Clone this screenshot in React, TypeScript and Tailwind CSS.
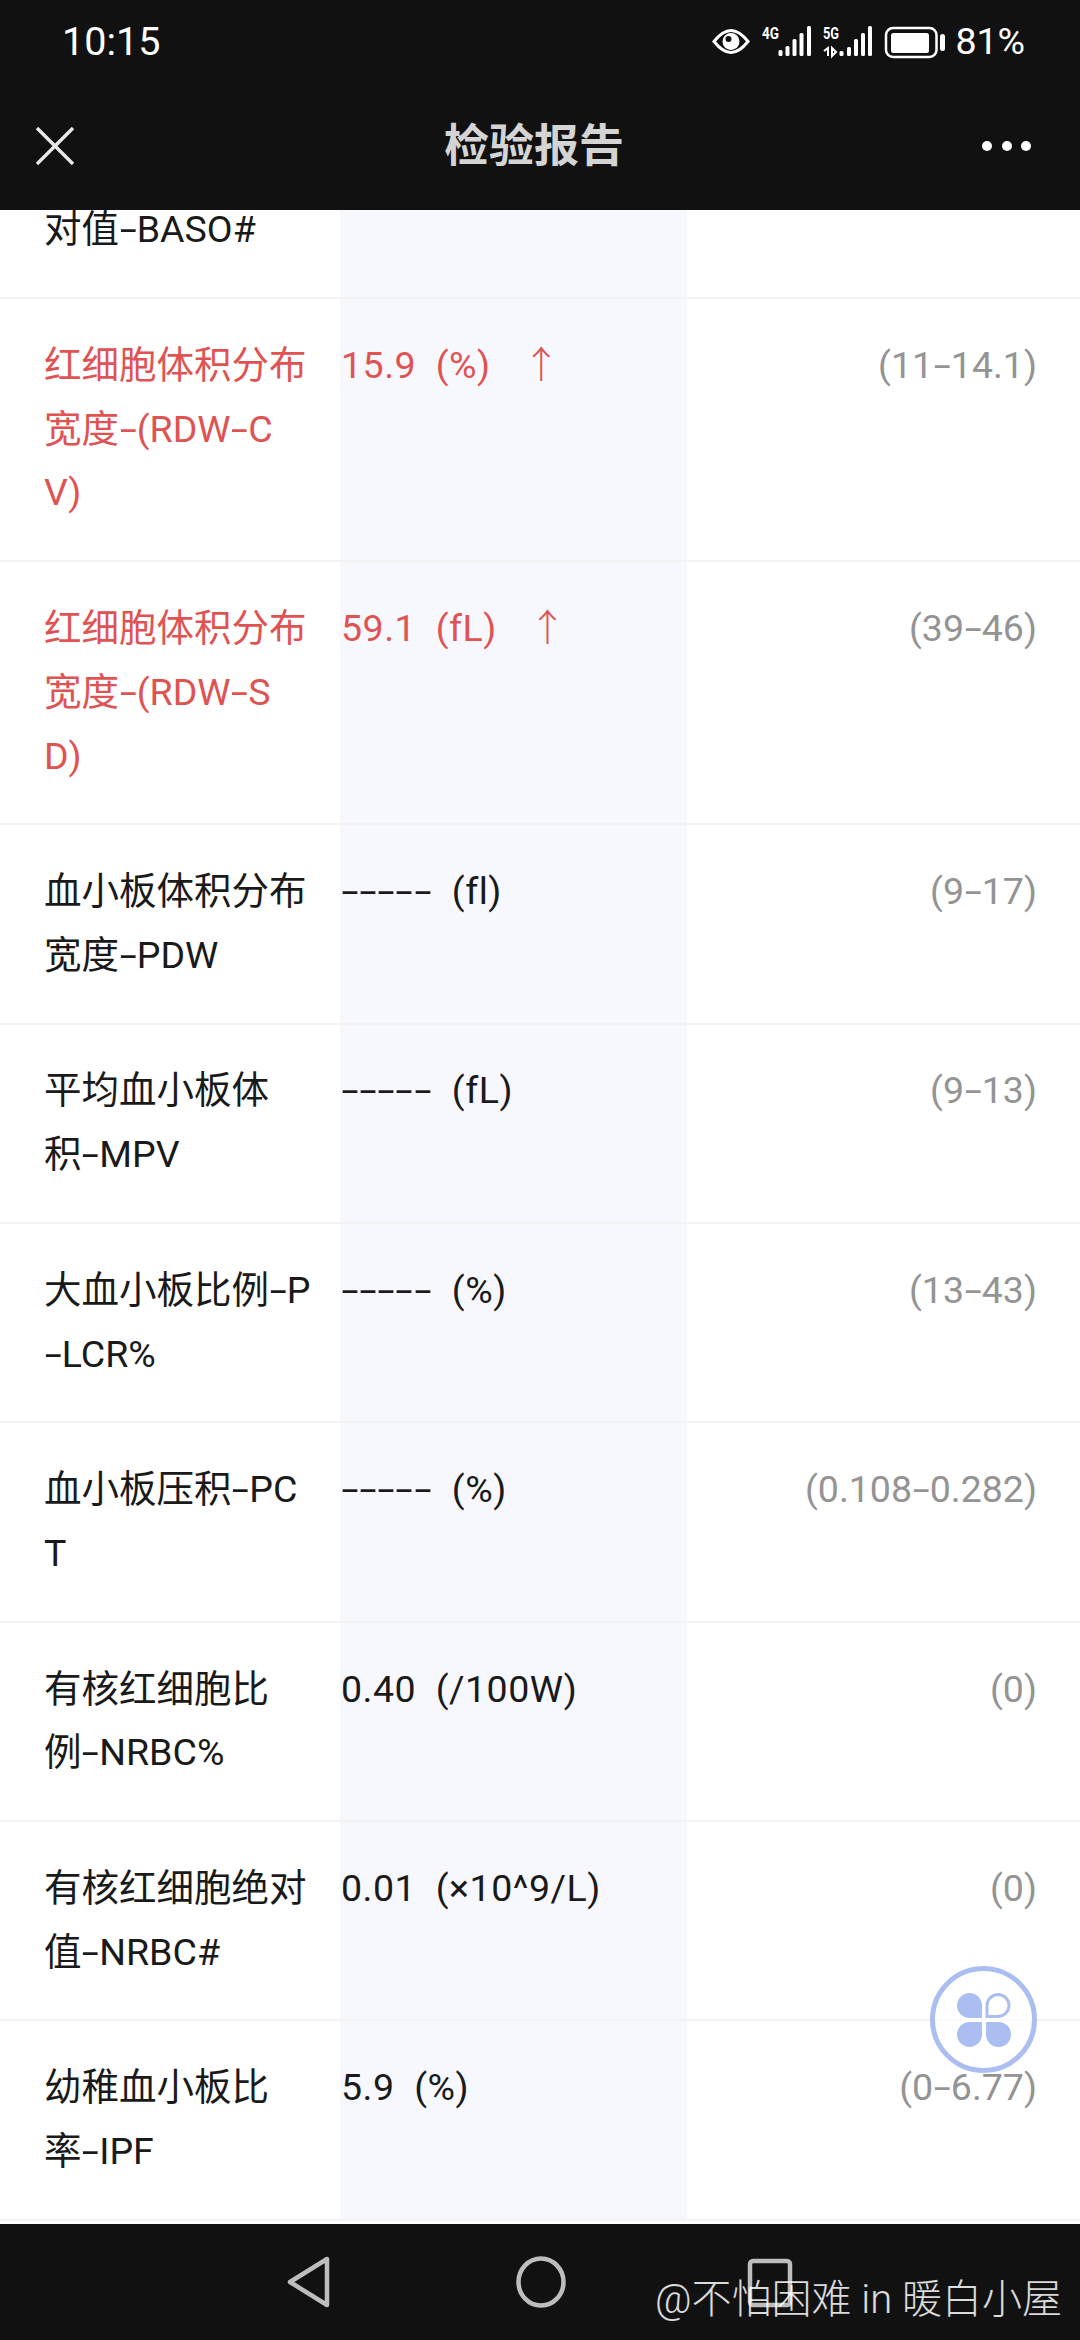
const rows = [
  { name: "嗜碱性粒细胞绝\n对值-BASO#", value: "", range: "" },
  { name: "红细胞体积分布\n宽度-(RDW-C\nV)", value: "15.9  (%)", range: "(11-14.1)", high: true },
  { name: "红细胞体积分布\n宽度-(RDW-S\nD)", value: "59.1  (fL)", range: "(39-46)", high: true },
  { name: "血小板体积分布\n宽度-PDW", value: "-----  (fl)", range: "(9-17)" },
  { name: "平均血小板体\n积-MPV", value: "-----  (fL)", range: "(9-13)" },
  { name: "大血小板比例-P\n-LCR%", value: "-----  (%)", range: "(13-43)" },
  { name: "血小板压积-PC\nT", value: "-----  (%)", range: "(0.108-0.282)" },
  { name: "有核红细胞比\n例-NRBC%", value: "0.40  (/100W)", range: "(0)" },
  { name: "有核红细胞绝对\n值-NRBC#", value: "0.01  (×10^9/L)", range: "(0)" },
  { name: "幼稚血小板比\n率-IPF", value: "5.9  (%)", range: "(0-6.77)" },
];

// the app's font has a much wider hyphen than Roboto
function Dashed({ text }: { text: string }) {
  const parts = text.split("-");
  return (
    <>
      {parts.map((part, i) => (
        <span key={i}>
          {i > 0 && <span className="mx-[3.7px] inline-block scale-x-[1.65]">-</span>}
          {part}
        </span>
      ))}
    </>
  );
}

function StatusIcons() {
  return (
    <svg className="overflow-visible" width="233" height="32" viewBox="713 25 233 32" fill="white">
      <path d="M715 40.5C721 33 727 29.5 732 29.5s11 3.5 17 11c-6 7.5-12 11-17 11s-11-3.500-17-11z" fill="none" stroke="white" strokeWidth="3" />
      <circle cx="732" cy="40.500" r="8.500" />
      <circle cx="729.500" cy="38" r="3" fill="#111" />
      <text x="763" y="38" fontSize="16" fontWeight="700" fontFamily="Roboto" textLength="17" lengthAdjust="spacingAndGlyphs">4G</text>
      <rect x="779.500" y="49" width="4" height="6" rx="1.500" />
      <rect x="786.500" y="45" width="4" height="10" rx="1.500" />
      <rect x="793.500" y="38" width="4" height="17" rx="1.500" />
      <rect x="800.500" y="32" width="4" height="23" rx="1.500" />
      <rect x="808" y="25" width="4" height="30" rx="1.500" />
      <text x="824" y="38" fontSize="16" fontWeight="700" fontFamily="Roboto" textLength="16" lengthAdjust="spacingAndGlyphs">5G</text>
      <path d="M829 55v-8l-4 3M833 47l4 4-4 4z" stroke="white" strokeWidth="2" fill="none" />
      <rect x="840.500" y="50" width="4" height="5" rx="1.500" />
      <rect x="848" y="46" width="4" height="9" rx="1.500" />
      <rect x="855" y="38" width="4" height="17" rx="1.500" />
      <rect x="862" y="32" width="4" height="23" rx="1.500" />
      <rect x="869" y="25" width="4" height="30" rx="1.500" />
      <rect x="887" y="27" width="50.500" height="29" rx="7" fill="none" stroke="white" strokeWidth="2.500" />
      <rect x="892" y="32" width="38" height="20" rx="2.500" />
      <rect x="941" y="33" width="5" height="17" rx="2.500" />
    </svg>
  );
}

export default function App() {
  return (
    <div className="relative flex h-[2340px] w-[1080px] flex-col overflow-hidden bg-white font-['Roboto','Noto_Sans_CJK_SC',sans-serif]">
      {/* top bar */}
      <div className="h-[210px] shrink-0 bg-[#111111]">
        <div className="flex h-[84px] items-center justify-between pl-[62px] pr-[55px] text-white">
          <span className="text-[39.5px] leading-none">10:15</span>
          <div className="flex items-center gap-[10px]">
            <StatusIcons />
            <span className="text-[37.5px] leading-none">81%</span>
          </div>
        </div>
        <div className="flex h-[124px] items-center pl-[36px] pr-[49px]">
          <svg width="38" height="38" viewBox="0 0 38 38" stroke="#e8e8e8" strokeWidth="3.4" fill="none">
            <path d="M1 1l36 36M37 1L1 37" />
          </svg>
          <span className="flex-1 pl-[12px] text-center text-[45px] font-bold leading-none text-[#d4d4d4]">检验报告</span>
          <div className="flex gap-[9.5px]">
            <span className="h-[10px] w-[10px] rounded-full bg-white" />
            <span className="h-[10px] w-[10px] rounded-full bg-white" />
            <span className="h-[10px] w-[10px] rounded-full bg-white" />
          </div>
        </div>
      </div>

      {/* report rows */}
      <div className="min-h-0 flex-1 overflow-hidden">
        <div className="mt-[-110.5px]">
          {rows.map((row) => (
            <div
              key={row.name}
              className={`flex border-b-2 border-[#f3f3f3] text-[37.5px] leading-[63.8px] ${row.high ? "text-[#e05353]" : "text-[#1a1a1a]"}`}
            >
              <div className="w-[340px] shrink-0 py-[34.9px] pl-[44px]">
                {row.name.split("\n").map((line) => (
                  <div key={line}>
                    <Dashed text={line} />
                  </div>
                ))}
              </div>
              <div className="w-[347px] shrink-0 whitespace-pre bg-[#f7f8fd] py-[34.9px] pl-[1px] tracking-[0.5px]">
                <Dashed text={row.value} />
                {row.high && <span className="ml-[32px] font-light">↑</span>}
              </div>
              <div className="flex-1 py-[34.9px] pr-[43px] text-right text-[#949494]">
                <Dashed text={row.range} />
              </div>
            </div>
          ))}
        </div>
      </div>

      {/* bottom nav */}
      <div className="relative flex h-[116px] shrink-0 items-start bg-[#111111] pl-[287px] pt-[32px]">
        <svg width="44" height="52" viewBox="0 0 44 52" fill="none" stroke="#bdbdbd" strokeWidth="4.500" strokeLinejoin="round">
          <path d="M40 3v46L3 26z" />
        </svg>
        <svg className="ml-[185px]" width="50" height="52" viewBox="0 0 50 52" fill="none" stroke="#bdbdbd" strokeWidth="4.500">
          <ellipse cx="25" cy="26" rx="22.500" ry="23.500" />
        </svg>
        <svg className="ml-[181px] mt-[2px]" width="46" height="50" viewBox="0 0 46 50" fill="none" stroke="#bdbdbd" strokeWidth="4.500">
          <rect x="3" y="3" width="40" height="44" rx="3" />
        </svg>
        <span className="absolute right-[18px] top-[52px] whitespace-nowrap text-[40px] font-light leading-[48px] text-white/85">@不怕困难 in 暖白小屋</span>
      </div>

      {/* floating button */}
      <div className="absolute left-[930px] top-[1966px] flex h-[107px] w-[107px] items-center justify-center rounded-full border-[5px] border-[#abbef2] bg-white/70">
        <svg width="54" height="55" viewBox="0 0 54 55" fill="#abbef2">
          <path d="M25 26H12.500A12.500 12.500 0 1 1 25 13.500Z" />
          <path d="M30 24.500V13.500A11 11 0 1 1 41 24.500Z" fill="none" stroke="#abbef2" strokeWidth="3" />
          <path d="M25 30V42.500A12.500 12.500 0 1 1 12.500 30Z" />
          <path d="M29 30H41A12.500 12.500 0 1 1 29 42.500Z" />
        </svg>
      </div>
    </div>
  );
}
